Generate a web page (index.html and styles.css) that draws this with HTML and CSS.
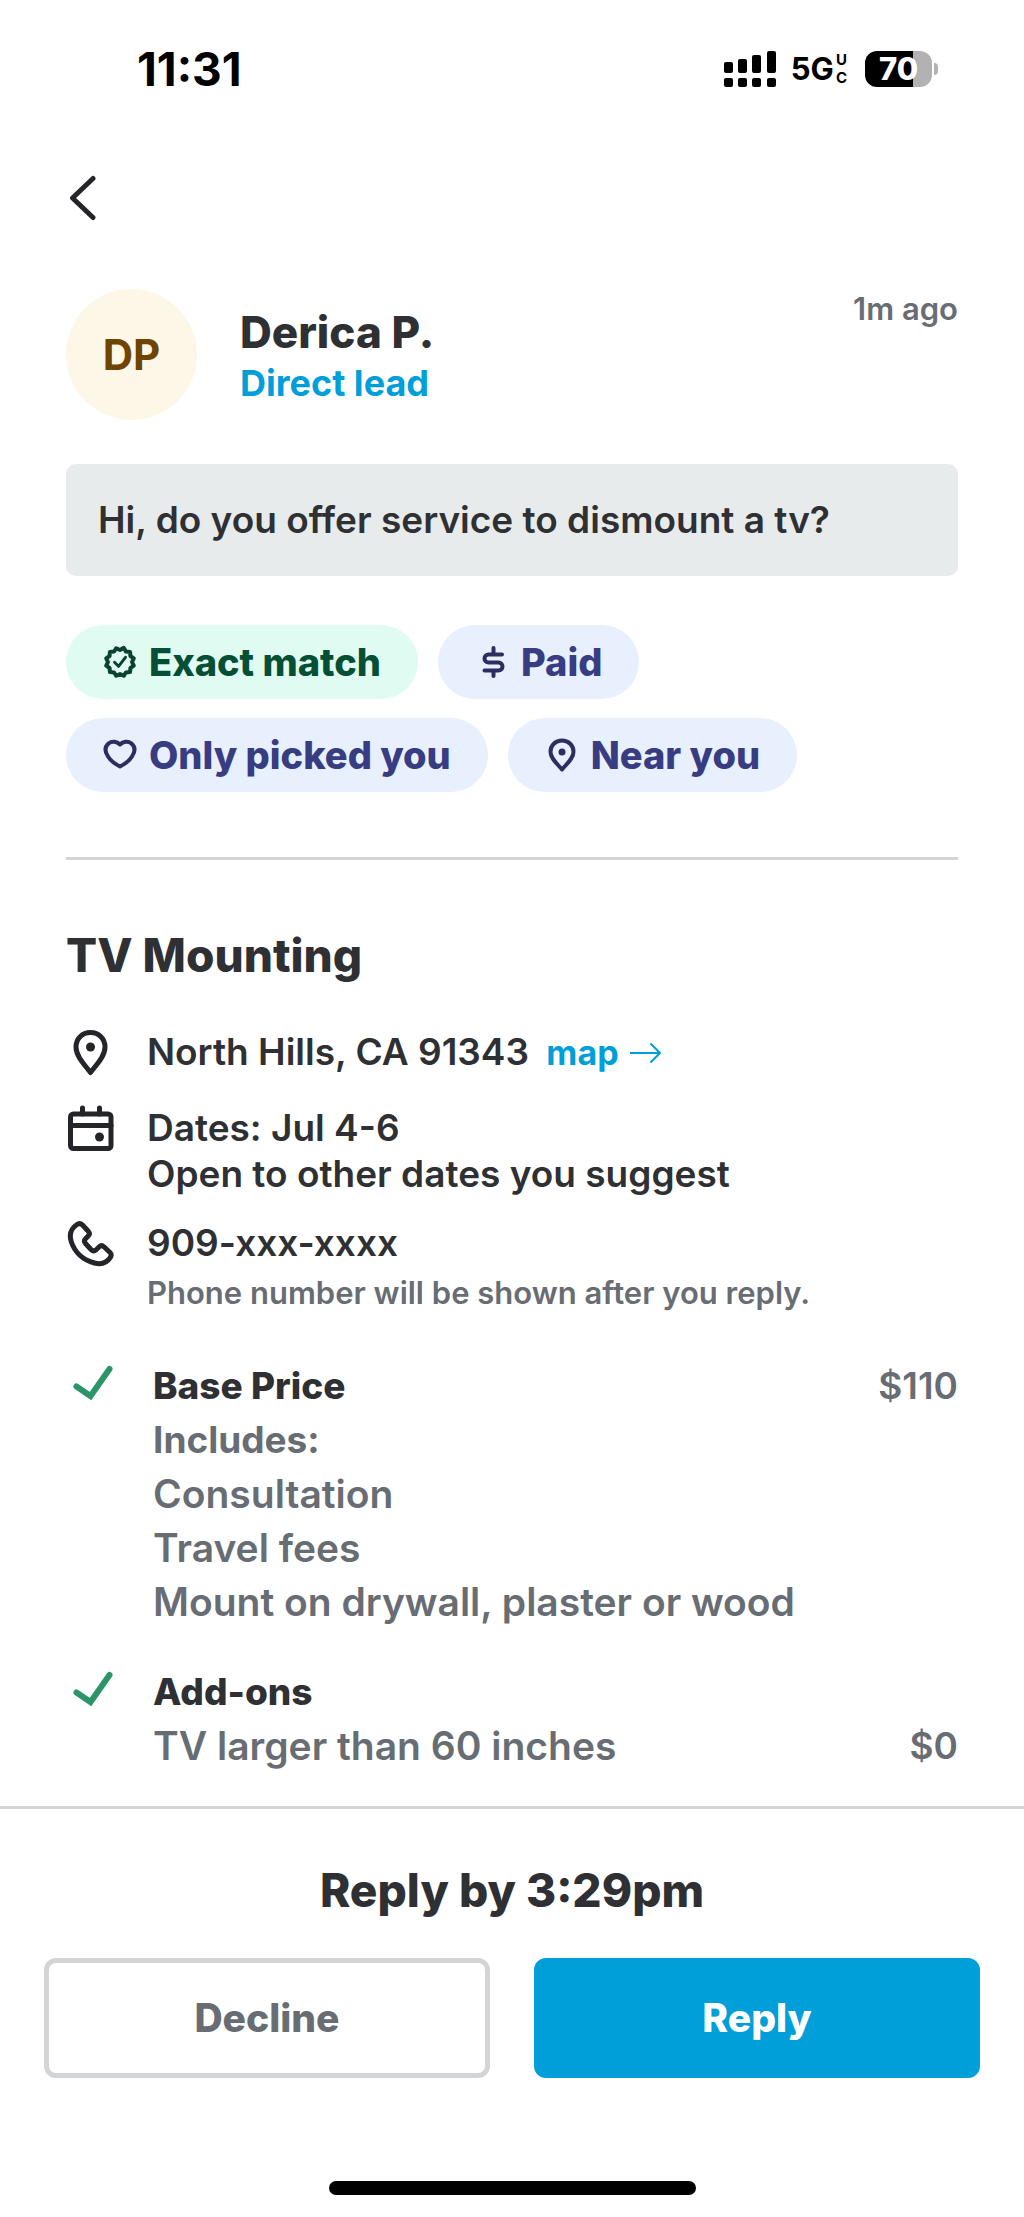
FILE: index.html
```html
<!DOCTYPE html>
<html lang="en">
<head>
  <meta charset="utf-8">
  <meta name="viewport" content="width=device-width, initial-scale=1">
  <title>Derica P. – Direct lead</title>
  <link rel="stylesheet" href="styles.css">
</head>
<body>
  <div class="screen">
    <div class="status">
      <span class="status-time">11:31</span>
      <div class="status-icons">
        <svg class="signal" viewBox="0 0 52 36" aria-hidden="true">
          <rect x="0" y="11" width="9" height="11" rx="2"/><rect x="14" y="8" width="9" height="14" rx="2"/><rect x="28" y="4" width="9" height="18" rx="2"/><rect x="43" y="0" width="9" height="22" rx="2"/>
          <rect x="0" y="27" width="9" height="9" rx="2"/><rect x="14" y="27" width="9" height="9" rx="2"/><rect x="28" y="27" width="9" height="9" rx="2"/><rect x="43" y="27" width="9" height="9" rx="2"/>
        </svg>
        <span class="network">5G</span>
        <span class="network-sub"><span>U</span><span>C</span></span>
        <span class="battery">70</span>
        <span class="battery-nub"></span>
      </div>
    </div>

    <nav class="nav">
      <button class="back" type="button" aria-label="Back">
        <svg viewBox="0 0 30 46"><path d="M26 3.500 5.500 23 26 42.500"/></svg>
      </button>
    </nav>

    <main class="main">
      <header class="lead">
        <div class="avatar">DP</div>
        <div class="lead-name">
          <h1>Derica P.</h1>
          <p>Direct lead</p>
        </div>
        <time class="lead-time">1m ago</time>
      </header>

      <p class="message">Hi, do you offer service to dismount a tv?</p>

      <ul class="chips">
        <li class="chip chip-match">
          <svg viewBox="0 0 34 34"><path d="M17 5l3.700-2.200L23 6.600l4.100.3.300 4.100 3.400 2.300L29 17l1.800 3.700-3.400 2.300-.3 4.100-4.100.3-2.300 3.400L17 29l-3.700 1.800-2.300-3.400-4.100-.3-.3-4.100-3.400-2.300L5 17l-1.800-3.700L6.600 11l.3-4.100 4.100-.3 2.300-3.400z"/><path class="fine" d="M11.500 17.300l4 4 7-9"/></svg>
          Exact match
        </li>
        <li class="chip">
          <svg viewBox="0 0 34 34"><path d="M27 9.500H13.500a4 4 0 0 0 0 8h10a4 4 0 0 1 0 8H9.500M18.500 3v6M18.500 26v5"/></svg>
          Paid
        </li>
        <li class="chip">
          <svg viewBox="0 0 34 34"><path d="M17 6.500C20 3.500 25 2.500 28.500 5.500c4 3.500 3.500 8.500.5 13C26.500 22.500 21 26.500 17 28.500 13 26.500 7.500 22.500 5 18.500c-3-4.500-3.500-9.500.5-13C9 2.500 14 3.500 17 6.500z"/></svg>
          Only picked you
        </li>
        <li class="chip">
          <svg viewBox="0 0 34 34"><path d="M17 2.500c6.500 0 11.500 4.800 11.500 11.200C28.500 20.500 22 25.500 17 31.500 12 25.500 5.500 20.500 5.500 13.700 5.500 7.300 10.500 2.500 17 2.500z"/><circle cx="17" cy="14" r="3.500"/></svg>
          Near you
        </li>
      </ul>

      <section class="job">
        <h2>TV Mounting</h2>
        <ul class="details">
          <li>
            <svg viewBox="0 0 48 48"><path d="M24.500 3.500c8.500 0 14.500 6.300 14.500 14.500C39 27 31 35 24.500 43.500 18 35 10 27 10 18 10 9.800 16 3.500 24.500 3.500z"/><circle cx="24.500" cy="18" r="4.500"/></svg>
            <div>
              <p>North Hills, CA 91343 <a class="map" href="#map">map <svg viewBox="0 0 32 24"><path d="M0 12h30M21 3l9 9-9 9"/></svg></a></p>
            </div>
          </li>
          <li>
            <svg viewBox="0 0 48 48"><rect x="4.500" y="9" width="40.500" height="34.500" rx="3"/><path d="M4.500 20.500h40.500M16.500 3v6M33.500 3v6"/><circle cx="33.500" cy="32" r="4.500"/></svg>
            <div>
              <p>Dates: Jul 4-6</p>
              <p>Open to other dates you suggest</p>
            </div>
          </li>
          <li>
            <svg viewBox="0 0 48 48"><path d="M11 4.500C13 3 14.500 3 16.500 5l6 6.500c1.500 1.800 1.200 3.200-.5 4.700l-2.500 2.500c-1.500 1.500-1.500 3 0 4.800l5.500 6c1.800 1.800 3.500 1.800 5.200.2L33 27c1.500-1.500 3.500-1.500 5-.2l6 5.700c1.700 1.700 1.500 3.200.2 5.200-3.500 5.300-9.200 7-15.700 5.300C17 40 8.500 32 5.200 21.500 3 14.500 5 8.500 11 4.500z"/></svg>
            <div>
              <p>909-xxx-xxxx</p>
              <p class="note">Phone number will be shown after you reply.</p>
            </div>
          </li>
        </ul>

        <div class="prices">
          <div class="price-group">
            <svg class="check" viewBox="0 0 40 36"><path d="M3.500 21.500 17.500 31 36.500 4"/></svg>
            <div class="price-rows">
              <div class="price-row"><h3>Base Price</h3><span>$110</span></div>
              <p class="includes">Includes:</p>
              <p>Consultation</p>
              <p>Travel fees</p>
              <p>Mount on drywall, plaster or wood</p>
            </div>
          </div>
          <div class="price-group">
            <svg class="check" viewBox="0 0 40 36"><path d="M3.500 21.500 17.500 31 36.500 4"/></svg>
            <div class="price-rows">
              <h3>Add-ons</h3>
              <div class="price-row"><p>TV larger than 60 inches</p><span>$0</span></div>
            </div>
          </div>
        </div>
      </section>
    </main>

    <footer class="footer">
      <p class="deadline">Reply by 3:29pm</p>
      <div class="actions">
        <button class="btn btn-decline" type="button">Decline</button>
        <button class="btn btn-reply" type="button">Reply</button>
      </div>
      <div class="home-indicator"></div>
    </footer>
  </div>
</body>
</html>
```
FILE: styles.css
```css
* { box-sizing: border-box; margin: 0; padding: 0; }

:root {
  --ink: #2f3033;
  --gray: #676d73;
  --blue: #009fd9;
  --line: #d3d4d5;
}

body {
  background: #fff;
  color: var(--ink);
  font-family: Inter, "Open Sans", sans-serif;
  font-size: 37px;
  font-weight: 600;
  line-height: 46px;
}

ul { list-style: none; }
a { color: var(--blue); text-decoration: none; }
svg { display: block; flex: none; fill: none; stroke: currentColor; stroke-linecap: round; stroke-linejoin: round; }
svg circle { fill: currentColor; stroke: none; }

.screen { display: flex; flex-direction: column; min-height: 100vh; }

/* Status bar */
.status {
  display: flex;
  align-items: center;
  justify-content: space-between;
  height: 138px;
  padding: 0 86px 0 137px;
  color: #000;
}
.status-time { font-size: 46px; font-weight: 700; }
.status-icons { display: flex; align-items: center; }
.signal { width: 52px; height: 36px; fill: #000; stroke: none; }
.network { margin-left: 15px; font-size: 31px; font-weight: 700; }
.network-sub {
  display: flex;
  flex-direction: column;
  margin-left: 2px;
  font-size: 15px;
  font-weight: 700;
  line-height: 18px;
}
.battery {
  width: 67px;
  height: 36px;
  margin-left: 18px;
  border-radius: 12px;
  background: linear-gradient(to right, #000 71%, #b2b2b2 71%);
  color: #fff;
  font-size: 31px;
  font-weight: 800;
  line-height: 36px;
  text-align: center;
}
.battery-nub { width: 4px; height: 12px; margin-left: 2px; border-radius: 0 4px 4px 0; background: #b2b2b2; }

/* Back navigation */
.nav { display: flex; align-items: center; height: 120px; padding: 0 67px; }
.back { border: 0; background: none; color: #242528; }
.back svg { width: 30px; height: 46px; stroke-width: 5; }

/* Lead summary */
.main { flex: 1; padding: 31px 66px 32px; }
.lead { display: flex; align-items: center; gap: 43px; }
.avatar {
  flex: none;
  width: 131px;
  height: 131px;
  border-radius: 50%;
  background: #fdf7e7;
  color: #6f4300;
  font-size: 42px;
  font-weight: 700;
  line-height: 131px;
  text-align: center;
}
.lead-name { flex: 1; }
.lead-name h1 { font-size: 44px; font-weight: 800; line-height: 56px; }
.lead-name p { color: var(--blue); font-size: 36px; font-weight: 700; }
.lead-time { align-self: flex-start; color: var(--gray); font-size: 31px; line-height: 40px; }

.message {
  margin-top: 44px;
  padding: 33px 32px;
  border-radius: 10px;
  background: #e8ebec;
}

.chips { display: flex; flex-wrap: wrap; gap: 19px 20px; margin-top: 49px; }
.chip {
  display: flex;
  align-items: center;
  gap: 12px;
  height: 74px;
  padding: 0 37px;
  border-radius: 37px;
  background: #e8f0fd;
  color: #383c80;
  font-size: 38px;
  font-weight: 800;
}
.chip svg { width: 34px; height: 34px; stroke: #2d2e60; stroke-width: 4; }
.chip circle { fill: #2d2e60; }
.chip-match { background: #e0fcf2; color: #054f36; }
.chip-match svg { stroke: #0a4231; }
.chip .fine { stroke-width: 3; }

/* Job details */
.job { margin-top: 65px; padding-top: 67px; border-top: 3px solid var(--line); }
.job h2 { font-size: 46px; font-weight: 800; line-height: 56px; }
.details { display: flex; flex-direction: column; gap: 23px; margin-top: 46px; }
.details li { display: flex; gap: 33px; }
.details li > svg { width: 48px; height: 48px; color: #242528; stroke-width: 5; }
.details li:first-child { margin-bottom: 5px; }
.map { display: inline-flex; align-items: center; gap: 11px; margin-left: 8px; font-size: 34px; font-weight: 700; }
.map svg { width: 32px; height: 24px; stroke-width: 2; }
.details .note { margin-top: 4px; color: var(--gray); font-size: 31px; }

/* Price breakdown */
.prices { display: flex; flex-direction: column; gap: 36px; margin-top: 43px; color: var(--gray); font-size: 39px; line-height: 54px; }
.price-group { display: flex; gap: 40px; }
.check { width: 40px; height: 36px; margin: 6px 0 0 7px; color: #2d9468; stroke-width: 6; stroke-linejoin: miter; }
.price-rows { flex: 1; }
.price-rows h3 { color: var(--ink); font-size: 37px; font-weight: 800; }
.price-row { display: flex; justify-content: space-between; }
.price-row span { font-size: 37px; }
.includes { font-size: 37px; font-weight: 700; }

/* Reply bar */
.footer { padding: 53px 44px 22px; border-top: 3px solid var(--line); }
.deadline { font-size: 46px; font-weight: 800; line-height: 56px; text-align: center; }
.actions { display: grid; grid-template-columns: 1fr 1fr; gap: 44px; margin-top: 40px; }
.btn {
  height: 120px;
  border: 5px solid var(--line);
  border-radius: 12px;
  background: #fff;
  color: var(--gray);
  font: 800 39px/46px Inter, "Open Sans", sans-serif;
}
.btn-reply { border-color: var(--blue); background: var(--blue); color: #fff; }
.home-indicator { width: 367px; height: 14px; margin: 103px auto 0; border-radius: 7px; background: #000; }
```
